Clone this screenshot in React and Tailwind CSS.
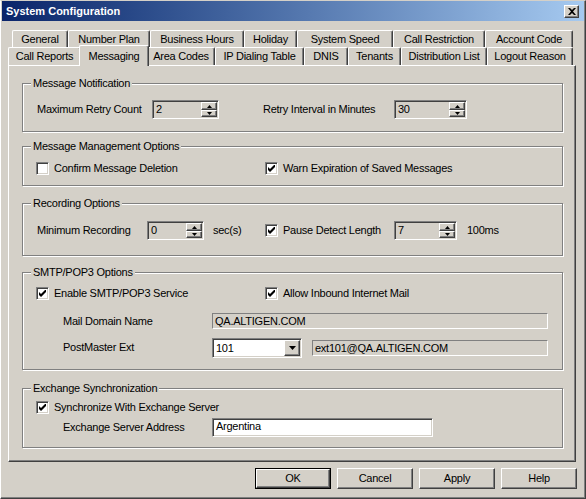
import React from "react";

const raised =
  "border border-t-white border-l-white border-r-[#404040] border-b-[#404040] shadow-[inset_-1px_-1px_0_#808080]";
const sunken =
  "border border-t-[#808080] border-l-[#808080] border-r-white border-b-white shadow-[inset_1px_1px_0_#404040,inset_-1px_-1px_0_#d4d0c8]";
const flat = "border border-t-[#808080] border-l-[#808080] border-r-white border-b-white";

const backRow = [
  ["General", "w-[56px]"],
  ["Number Plan", "w-[82px]"],
  ["Business Hours", "w-[94px]"],
  ["Holiday", "w-[53px]"],
  ["System Speed", "w-[96px]"],
  ["Call Restriction", "w-[92px]"],
  ["Account Code", "w-[88px]"],
];

const frontRow = [
  ["Call Reports", "w-[73px]"],
  ["Messaging", "w-[70px]", true],
  ["Area Codes", "w-[68px]"],
  ["IP Dialing Table", "w-[89px]"],
  ["DNIS", "w-[44px]"],
  ["Tenants", "w-[53px]"],
  ["Distribution List", "w-[86px]"],
  ["Logout Reason", "w-[86px]"],
];

function Tab({ label, w, active }) {
  if (active) {
    return (
      <div
        className={`${w} h-[21px] -mx-[2px] relative top-[1px] z-10 bg-[#d4d0c8] flex items-start justify-center pt-[2px] rounded-t-[2px] border-t border-l border-r border-t-white border-l-white border-r-[#404040] shadow-[inset_-1px_0_0_#808080]`}
      >
        {label}
      </div>
    );
  }
  return (
    <div
      className={`${w} h-full flex items-center justify-center rounded-t-[2px] border-t border-l border-r border-t-white border-l-white border-r-[#404040] shadow-[inset_-1px_0_0_#808080]`}
    >
      {label}
    </div>
  );
}

function Arrow({ down }) {
  return (
    <svg width="5" height="3" viewBox="0 0 5 3">
      {down ? <polygon points="0,0 5,0 2.5,3" fill="black" /> : <polygon points="2.5,0 5,3 0,3" fill="black" />}
    </svg>
  );
}

function Spinner({ value, w }) {
  return (
    <div className={`${w} h-[19px] flex p-[1px] bg-[#d4d0c8] ${sunken}`}>
      <div className="flex-1 pl-[2px] leading-[15px]">{value}</div>
      <div className="w-[16px] flex flex-col">
        <div className={`h-[8px] flex items-center justify-center bg-[#d4d0c8] ${raised}`}>
          <Arrow />
        </div>
        <div className={`flex-1 flex items-center justify-center bg-[#d4d0c8] ${raised}`}>
          <Arrow down />
        </div>
      </div>
    </div>
  );
}

function Check({ checked }) {
  return (
    <div className={`w-[13px] h-[13px] shrink-0 bg-white flex items-center justify-center ${sunken}`}>
      {checked && (
        <svg width="7" height="7" viewBox="0 0 7 7">
          <path d="M0 2 L2 4 L7 -1 L7 2 L2 7 L0 5 Z" fill="black" />
        </svg>
      )}
    </div>
  );
}

function CheckLabel({ checked, label, w }) {
  return (
    <div className={`flex items-center gap-[5px] ${w}`}>
      <Check checked={checked} />
      <span>{label}</span>
    </div>
  );
}

function Group({ title, h, mt, children }) {
  return (
    <div
      className={`relative w-[541px] ${h} ${mt} border border-[#808080] shadow-[inset_1px_1px_0_#fff,1px_1px_0_#fff]`}
    >
      <span className="absolute -top-[7px] left-[8px] px-[2px] bg-[#d4d0c8] leading-[13px]">{title}</span>
      {children}
    </div>
  );
}

function Button({ label, def }) {
  if (def) {
    return (
      <div className="w-[76px] h-[21px] border border-black">
        <div className={`w-full h-full flex items-center justify-center ${raised}`}>{label}</div>
      </div>
    );
  }
  return <div className={`w-[76px] h-[21px] flex items-center justify-center ${raised}`}>{label}</div>;
}

export default function App() {
  return (
    <div className="w-[586px] h-[499px] bg-[#d4d0c8] border border-t-[#d4d0c8] border-l-white border-r-[#404040] border-b-[#404040] shadow-[inset_-1px_-1px_0_#808080] text-[11px] tracking-[-0.25px] text-black font-['Liberation_Sans',Arial,sans-serif] overflow-hidden select-none">
      {/* title bar */}
      <div className="h-[20px] mx-[1px] flex items-center justify-between bg-gradient-to-r from-[#0a246a] to-[#a6caf0]">
        <span className="pl-[4px] text-white font-bold tracking-normal">System Configuration</span>
        <div className={`w-[15px] h-[13px] mr-[5px] bg-[#d4d0c8] flex items-center justify-center ${raised}`}>
          <svg width="8" height="7" viewBox="0 0 8 7">
            <path d="M0 0 L2 0 L4 2 L6 0 L8 0 L5 3.5 L8 7 L6 7 L4 5 L2 7 L0 7 L3 3.5 Z" fill="black" />
          </svg>
        </div>
      </div>

      <div className="px-[7px] mt-[9px]">
        {/* tabs */}
        <div className="flex h-[17px] pl-[4px]">
          {backRow.map(([l, w]) => (
            <Tab key={l} label={l} w={w} />
          ))}
        </div>
        <div className="flex items-end h-[18px]">
          {frontRow.map(([l, w, a]) => (
            <Tab key={l} label={l} w={w} active={a} />
          ))}
        </div>

        {/* panel */}
        <div className="w-[568px] h-[397px] pl-[13px] border border-t-white border-l-white border-r-[#404040] border-b-[#404040] shadow-[inset_-1px_-1px_0_#808080] flex flex-col">
          <Group title="Message Notification" h="h-[49px]" mt="mt-[17px]">
            <div className="flex items-center pt-[16px] pl-[14px]">
              <span className="w-[115px]">Maximum Retry Count</span>
              <Spinner value="2" w="w-[67px]" />
              <span className="w-[131px] ml-[44px]">Retry Interval in Minutes</span>
              <Spinner value="30" w="w-[73px]" />
            </div>
          </Group>

          <Group title="Message Management Options" h="h-[40px]" mt="mt-[14px]">
            <div className="flex items-center h-[13px] mt-[15px] pl-[13px]">
              <CheckLabel label="Confirm Message Deletion" w="w-[229px]" />
              <CheckLabel checked label="Warn Expiration of Saved Messages" />
            </div>
          </Group>

          <Group title="Recording Options" h="h-[53px]" mt="mt-[17px]">
            <div className="flex items-center pt-[17px] pl-[14px]">
              <span className="w-[110px]">Minimum Recording</span>
              <Spinner value="0" w="w-[57px]" />
              <span className="w-[52px] ml-[9px]">sec(s)</span>
              <Check checked />
              <span className="w-[111px] ml-[5px]">Pause Detect Length</span>
              <Spinner value="7" w="w-[63px]" />
              <span className="ml-[10px]">100ms</span>
            </div>
          </Group>

          <Group title="SMTP/POP3 Options" h="h-[98px]" mt="mt-[16px]">
            <div className="flex items-center h-[13px] mt-[14px] pl-[13px]">
              <CheckLabel checked label="Enable SMTP/POP3 Service" w="w-[229px]" />
              <CheckLabel checked label="Allow Inbound Internet Mail" />
            </div>
            <div className="flex items-center mt-[13px] pl-[40px]">
              <span className="w-[149px]">Mail Domain Name</span>
              <div className={`w-[336px] h-[16px] pl-[2px] leading-[14px] ${flat}`}>QA.ALTIGEN.COM</div>
            </div>
            <div className="flex items-center mt-[8px] pl-[40px]">
              <span className="w-[149px]">PostMaster Ext</span>
              <div className={`w-[90px] h-[20px] p-[1px] flex bg-white ${sunken}`}>
                <div className="flex-1 pl-[2px] leading-[16px]">101</div>
                <div className={`w-[16px] flex items-center justify-center bg-[#d4d0c8] ${raised}`}>
                  <svg width="7" height="4" viewBox="0 0 7 4">
                    <polygon points="0,0 7,0 3.5,4" fill="black" />
                  </svg>
                </div>
              </div>
              <div className={`w-[236px] h-[16px] ml-[10px] pl-[2px] leading-[14px] ${flat}`}>ext101@QA.ALTIGEN.COM</div>
            </div>
          </Group>

          <Group title="Exchange Synchronization" h="h-[60px]" mt="mt-[18px]">
            <div className="flex items-center h-[13px] mt-[12px] pl-[13px]">
              <CheckLabel checked label="Synchronize With Exchange Server" />
            </div>
            <div className="flex items-center mt-[4px] pl-[40px]">
              <span className="w-[149px]">Exchange Server Address</span>
              <div className={`w-[221px] h-[19px] pl-[3px] bg-white leading-[15px] ${sunken}`}>Argentina</div>
            </div>
          </Group>
        </div>

        {/* buttons */}
        <div className="flex justify-end gap-[6px] mt-[6px] pr-[1px]">
          <Button label="OK" def />
          <Button label="Cancel" />
          <Button label="Apply" />
          <Button label="Help" />
        </div>
      </div>
    </div>
  );
}
